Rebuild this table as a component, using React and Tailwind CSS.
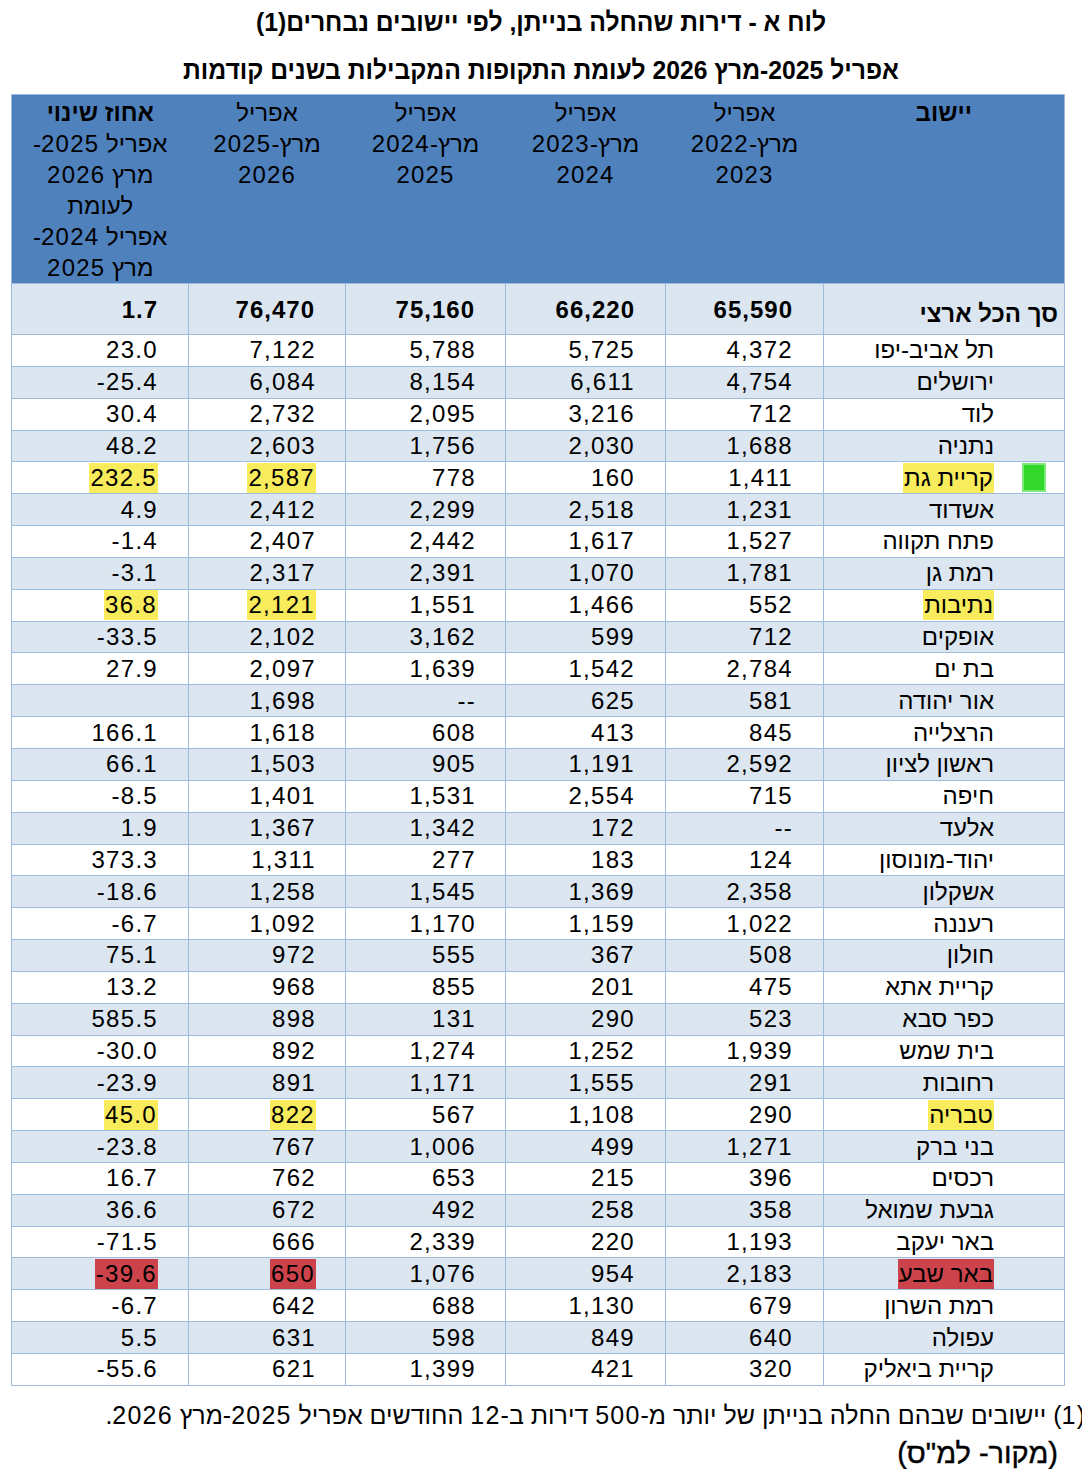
import React from "react";

const rows = [
  ["תל אביב-יפו", "4,372", "5,725", "5,788", "7,122", "23.0"],
  ["ירושלים", "4,754", "6,611", "8,154", "6,084", "-25.4"],
  ["לוד", "712", "3,216", "2,095", "2,732", "30.4"],
  ["נתניה", "1,688", "2,030", "1,756", "2,603", "48.2"],
  ["קריית גת", "1,411", "160", "778", "2,587", "232.5", "y", true],
  ["אשדוד", "1,231", "2,518", "2,299", "2,412", "4.9"],
  ["פתח תקווה", "1,527", "1,617", "2,442", "2,407", "-1.4"],
  ["רמת גן", "1,781", "1,070", "2,391", "2,317", "-3.1"],
  ["נתיבות", "552", "1,466", "1,551", "2,121", "36.8", "y"],
  ["אופקים", "712", "599", "3,162", "2,102", "-33.5"],
  ["בת ים", "2,784", "1,542", "1,639", "2,097", "27.9"],
  ["אור יהודה", "581", "625", "--", "1,698", ""],
  ["הרצלייה", "845", "413", "608", "1,618", "166.1"],
  ["ראשון לציון", "2,592", "1,191", "905", "1,503", "66.1"],
  ["חיפה", "715", "2,554", "1,531", "1,401", "-8.5"],
  ["אלעד", "--", "172", "1,342", "1,367", "1.9"],
  ["יהוד-מונוסון", "124", "183", "277", "1,311", "373.3"],
  ["אשקלון", "2,358", "1,369", "1,545", "1,258", "-18.6"],
  ["רעננה", "1,022", "1,159", "1,170", "1,092", "-6.7"],
  ["חולון", "508", "367", "555", "972", "75.1"],
  ["קריית אתא", "475", "201", "855", "968", "13.2"],
  ["כפר סבא", "523", "290", "131", "898", "585.5"],
  ["בית שמש", "1,939", "1,252", "1,274", "892", "-30.0"],
  ["רחובות", "291", "1,555", "1,171", "891", "-23.9"],
  ["טבריה", "290", "1,108", "567", "822", "45.0", "y"],
  ["בני ברק", "1,271", "499", "1,006", "767", "-23.8"],
  ["רכסים", "396", "215", "653", "762", "16.7"],
  ["גבעת שמואל", "358", "258", "492", "672", "36.6"],
  ["באר יעקב", "1,193", "220", "2,339", "666", "-71.5"],
  ["באר שבע", "2,183", "954", "1,076", "650", "-39.6", "r"],
  ["רמת השרון", "679", "1,130", "688", "642", "-6.7"],
  ["עפולה", "640", "849", "598", "631", "5.5"],
  ["קריית ביאליק", "320", "421", "1,399", "621", "-55.6"],
];

function Hl({ kind, children }) {
  if (kind === "y")
    return <span className="inline-block bg-[#f8ec5c] px-[1px] leading-[30px]">{children}</span>;
  if (kind === "r")
    return <span className="inline-block bg-[#cc434b] px-[1px] leading-[30px]">{children}</span>;
  return <span>{children}</span>;
}

function N({ children }) {
  return <span className="tracking-[1.2px]">{children}</span>;
}

function PeriodHead({ from, to }) {
  return (
    <>
      אפריל
      <br />
      <bdi dir="ltr">
        <N>{from}</N>-מרץ
      </bdi>
      <br />
      <N>{to}</N>
    </>
  );
}

const cellB = "border border-[#9dbbdd]";
const numCell = `${cellB} text-right p-0 tracking-[1.3px]`;

export default function App() {
  return (
    <div
      dir="rtl"
      className="w-[1082px] h-[1484px] bg-white text-black overflow-hidden"
      style={{ fontFamily: '"Liberation Sans", Arial, "Noto Sans", sans-serif' }}
    >
      <div className="pt-[8px] text-center font-bold text-[26px] leading-[29px] scale-x-[0.95]">
        <div>לוח א - דירות שהחלה בנייתן, לפי יישובים נבחרים(1)</div>
        <div className="mt-[19px]">אפריל 2025-מרץ 2026 לעומת התקופות המקבילות בשנים קודמות</div>
      </div>

      <div className="pr-[17px] pl-[12px] mt-[9px]">
        <table className="w-[1053px] table-fixed border-collapse border border-[#9dbbdd] text-[24px]">
          <colgroup>
            <col className="w-[241px]" />
            <col className="w-[158px]" />
            <col className="w-[160px]" />
            <col className="w-[160px]" />
            <col className="w-[157px]" />
            <col className="w-[177px]" />
          </colgroup>
          <thead>
            <tr className="h-[188px] bg-[#4f81bd] align-top text-center leading-[31px]">
              <th className="pt-[2px] font-bold">יישוב</th>
              <th className="pt-[2px] font-normal"><PeriodHead from="2022" to="2023" /></th>
              <th className="pt-[2px] font-normal"><PeriodHead from="2023" to="2024" /></th>
              <th className="pt-[2px] font-normal"><PeriodHead from="2024" to="2025" /></th>
              <th className="pt-[2px] font-normal"><PeriodHead from="2025" to="2026" /></th>
              <th className="pt-[2px] font-normal">
                <span className="font-bold">אחוז שינוי</span>
                <br />
                אפריל <N>2025</N>-
                <br />
                מרץ <N>2026</N>
                <br />
                לעומת
                <br />
                אפריל <N>2024</N>-
                <br />
                מרץ <N>2025</N>
              </th>
            </tr>
          </thead>
          <tbody>
            <tr className="h-[51px] bg-[#dce6f1] font-bold">
              <td className={`${cellB} text-right pr-[6px] pt-[9px]`}>סך הכל ארצי</td>
              {["65,590", "66,220", "75,160", "76,470", "1.7"].map((v, i) => (
                <td key={i} dir="ltr" className={`${cellB} text-right pr-[30px] pt-[2px] tracking-[1px]`}>{v}</td>
              ))}
            </tr>
            {rows.map((r, idx) => {
              const [name, a, b, c, d, e, hl, mark] = r;
              const bg = idx % 2 === 0 ? "bg-white" : "bg-[#dce6f1]";
              return (
                <tr key={idx} className={`h-[31.85px] leading-[30px] ${bg}`}>
                  <td className={`${cellB} relative text-right pr-[70px] p-0`}>
                    <Hl kind={hl}>{name}</Hl>
                    {mark && (
                      <span className="absolute right-[18px] top-[1px] w-[24px] h-[29px] bg-[#33d62a] border-[2px] border-[#7ee878]" />
                    )}
                  </td>
                  <td dir="ltr" className={`${numCell} pr-[30px]`}>{a}</td>
                  <td dir="ltr" className={`${numCell} pr-[30px]`}>{b}</td>
                  <td dir="ltr" className={`${numCell} pr-[29px]`}>{c}</td>
                  <td dir="ltr" className={`${numCell} pr-[29px]`}>
                    <Hl kind={hl}>{d}</Hl>
                  </td>
                  <td dir="ltr" className={`${numCell} pr-[30px]`}>
                    <Hl kind={hl}>{e}</Hl>
                  </td>
                </tr>
              );
            })}
          </tbody>
        </table>
      </div>

      <div className="mt-[14px] text-[25px] leading-[30px] overflow-hidden">
        <div className="whitespace-nowrap text-right mr-[-3px]">
          (<N>1</N>) יישובים שבהם החלה בנייתן של יותר מ-<N>500</N> דירות ב-<N>12</N> החודשים אפריל <N>2025</N>-מרץ <N>2026</N>.
        </div>
        <div className="mt-[7px] pr-[24px] text-[29px] leading-[32px] [-webkit-text-stroke:0.4px_black]">(מקור- למ"ס)</div>
      </div>
    </div>
  );
}
